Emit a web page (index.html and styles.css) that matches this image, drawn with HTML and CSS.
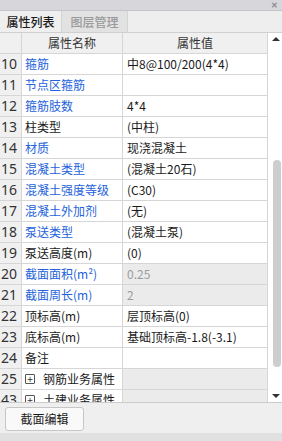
FILE: index.html
```html
<!DOCTYPE html>
<html>
<head>
<meta charset="utf-8">
<link rel="stylesheet" href="styles.css">
</head>
<body>
<div class="panel">
  <div class="topbar"><span class="close">✕</span></div>
  <div class="tabs">
    <div class="tab active">属性列表</div>
    <div class="tab">图层管理</div>
  </div>
  <div class="tablearea">
    <div class="grid">
      <div class="row head">
        <div class="num"></div>
        <div class="name">属性名称</div>
        <div class="val">属性值</div>
      </div>
      <div class="row"><div class="num">10</div><div class="name blue">箍筋</div><div class="val">中8@100/200(4*4)</div></div>
      <div class="row"><div class="num">11</div><div class="name blue">节点区箍筋</div><div class="val"></div></div>
      <div class="row"><div class="num">12</div><div class="name blue">箍筋肢数</div><div class="val">4*4</div></div>
      <div class="row"><div class="num">13</div><div class="name">柱类型</div><div class="val">(中柱)</div></div>
      <div class="row"><div class="num">14</div><div class="name blue">材质</div><div class="val">现浇混凝土</div></div>
      <div class="row"><div class="num">15</div><div class="name blue">混凝土类型</div><div class="val">(混凝土20石)</div></div>
      <div class="row"><div class="num">16</div><div class="name blue">混凝土强度等级</div><div class="val">(C30)</div></div>
      <div class="row"><div class="num">17</div><div class="name blue">混凝土外加剂</div><div class="val">(无)</div></div>
      <div class="row"><div class="num">18</div><div class="name blue">泵送类型</div><div class="val">(混凝土泵)</div></div>
      <div class="row"><div class="num">19</div><div class="name">泵送高度(m)</div><div class="val">(0)</div></div>
      <div class="row"><div class="num">20</div><div class="name blue">截面面积(m²)</div><div class="val dis">0.25</div></div>
      <div class="row"><div class="num">21</div><div class="name blue">截面周长(m)</div><div class="val dis">2</div></div>
      <div class="row"><div class="num">22</div><div class="name">顶标高(m)</div><div class="val">层顶标高(0)</div></div>
      <div class="row"><div class="num">23</div><div class="name">底标高(m)</div><div class="val">基础顶标高-1.8(-3.1)</div></div>
      <div class="row"><div class="num">24</div><div class="name">备注</div><div class="val"></div></div>
      <div class="row"><div class="num">25</div><div class="name group"><span class="plus">+</span>钢筋业务属性</div><div class="val dis"></div></div>
      <div class="row"><div class="num">43</div><div class="name group"><span class="plus">+</span>土建业务属性</div><div class="val dis"></div></div>
    </div>
    <div class="scroll">
      <div class="arrow up"></div>
      <div class="track"><div class="thumb"></div></div>
      <div class="arrow down"></div>
    </div>
  </div>
  <div class="bottom">
    <div class="btn">截面编辑</div>
  </div>
  <div class="strip"></div>
</div>
</body>
</html>
```

FILE: styles.css
```css
* { box-sizing: border-box; }
html, body { margin: 0; padding: 0; }
body {
  width: 282px;
  height: 441px;
  overflow: hidden;
  font-family: "Noto Sans CJK SC", "Noto Sans", sans-serif;
  font-size: 12px;
  color: #1a1a1a;
  background: #efefef;
}
.panel { display: flex; flex-direction: column; height: 441px; }
.topbar {
  height: 11px;
  background: #d6d6db;
  border-bottom: 1px solid #c4c4ca;
  display: flex;
  justify-content: flex-end;
  align-items: center;
  padding-right: 4px;
}
.close { font-size: 8px; line-height: 8px; color: #8a8a90; font-weight: bold; }
.tabs {
  height: 22px;
  background: #eeeeee;
  display: flex;
  border-bottom: 1px solid #d0d0d0;
}
.tab {
  width: 66px;
  line-height: 21px;
  text-align: center;
  color: #9a9a9a;
  background: #e2e2e2;
  border-right: 1px solid #d4d4d4;
  font-weight: 500;
}
.tab.active { color: #1a1a1a; background: #efefef; width: 62px; }
.tablearea {
  height: 370px;
  display: flex;
  background: #ffffff;
  border-bottom: 1px solid #cccccc;
}
.grid { width: 268px; overflow: hidden; }
.row { display: flex; height: 21px; }
.row > div {
  height: 21px;
  line-height: 20px;
  border-right: 1px solid #d6d6d6;
  border-bottom: 1px solid #d6d6d6;
  white-space: nowrap;
  overflow: hidden;
}
.num {
  width: 22px;
  background: #f0f0f0;
  padding-left: 1px;
  color: #333;
  font-family: "Noto Sans", sans-serif;
  font-size: 14px;
}
.name { width: 101px; padding-left: 3px; background: #fff; }
.val { width: 145px; padding-left: 4px; background: #fff; }
.head > div { background: #f0f0f0; text-align: center; padding-left: 0; color: #333; }
.blue { color: #2462dc; }
.dis { background: #ebebeb; color: #9c9c9c; }
.group { display: flex; align-items: center; }
.plus {
  width: 10px;
  height: 10px;
  border: 1px solid #555;
  border-radius: 1px;
  font-size: 10px;
  line-height: 8px;
  text-align: center;
  margin-right: 8px;
  color: #333;
}
.scroll {
  width: 14px;
  display: flex;
  flex-direction: column;
  align-items: center;
  background: #fff;
}
.arrow { width: 0; height: 0; border-left: 4px solid transparent; border-right: 4px solid transparent; }
.arrow.up { border-bottom: 4px solid #333; margin-top: 4px; margin-left: 2px; }
.arrow.down { border-top: 4px solid #333; margin-bottom: 4px; margin-left: 2px; }
.track { flex: 1; width: 100%; padding-top: 119px; padding-bottom: 27px; display: flex; justify-content: flex-end; padding-right: 1px; }
.thumb { width: 8px; background: #cdcdcd; border-radius: 4px; }
.bottom {
  flex: 1;
  background: #efefef;
  padding: 4px 5px 0;
}
.btn {
  width: 79px;
  height: 24px;
  line-height: 22px;
  text-align: center;
  border: 1px solid #c6c6c6;
  border-radius: 3px;
  background: #f9f9f9;
  color: #1a1a1a;
}
.strip { height: 8px; background: #e0e0e0; }
```
